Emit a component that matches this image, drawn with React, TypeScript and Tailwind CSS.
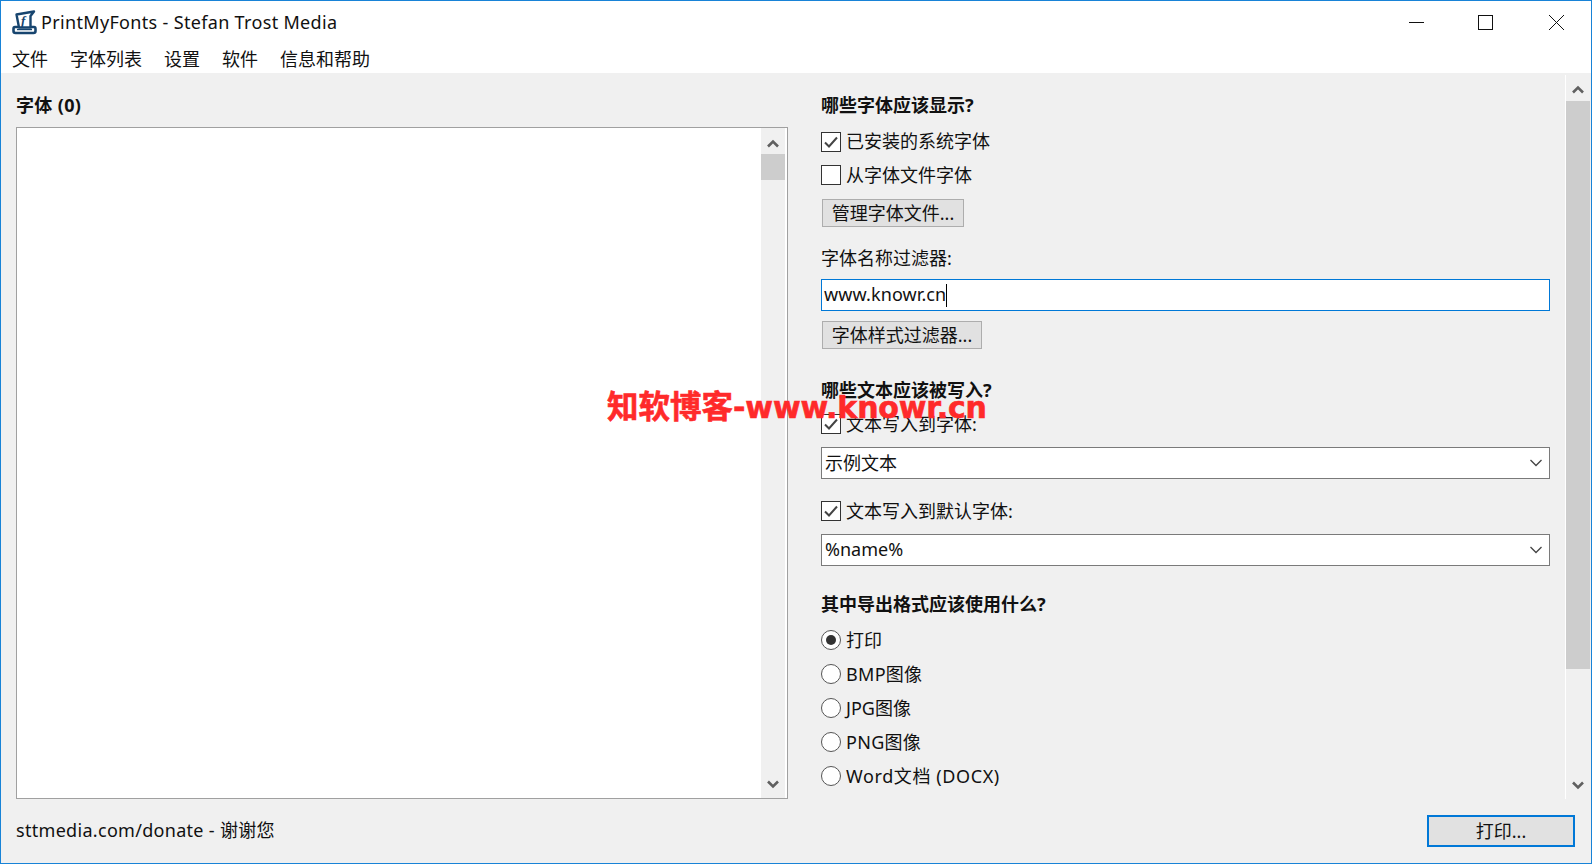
import React from "react";

const font = { fontFamily: '"Noto Sans", "Noto Sans CJK SC", sans-serif' };

function Logo() {
  return (
    <svg width="25" height="25" viewBox="0 0 25 25" fill="none" className="shrink-0">
      <path d="M4.5 4.5 L22 1.5 L18.5 6 L18.5 17.5 L7 17.5 Z" fill="#fff" stroke="#17456f" strokeWidth="2.4" strokeLinejoin="round" />
      <path d="M6 17 L3 17 Q1.5 17 1.5 19 L1.5 21 Q1.5 23 3.5 23 L21.5 23 Q23.5 23 23.5 21 L23.5 19 Q23.5 17 22 17 L19 17" stroke="#17456f" strokeWidth="2.6" />
      <path d="M5 19.5 H20" stroke="#17456f" strokeWidth="1.4" />
      <text x="9" y="15" fontSize="13" fontWeight="700" fontStyle="italic" fill="#17456f" fontFamily="Liberation Serif, serif">f</text>
    </svg>
  );
}

function Check({ on }: { on: boolean }) {
  return (
    <span className="flex h-[20px] w-[20px] shrink-0 items-center justify-center border border-[#333333] bg-white">
      {on && (
        <svg width="16" height="14" viewBox="0 0 16 14" fill="none">
          <path d="M2 7.5 L6 11.5 L14 2.5" stroke="#444444" strokeWidth="2" />
        </svg>
      )}
    </span>
  );
}

function CheckRow({ on, label, mt, lift }: { on: boolean; label: string; mt: string; lift?: string }) {
  return (
    <div className={`flex h-[20px] items-center gap-[5px] ${mt}`}>
      <Check on={on} />
      <span className={`leading-[20px] ${lift ?? ""}`}>{label}</span>
    </div>
  );
}

function RadioRow({ on, label, mt, latin }: { on: boolean; label: string; mt: string; latin?: string }) {
  return (
    <div className={`flex h-[20px] items-center gap-[5px] ${mt}`}>
      <span className="flex h-[20px] w-[20px] shrink-0 items-center justify-center rounded-full border border-[#555555] bg-white">
        {on && <span className="h-[10px] w-[10px] rounded-full bg-[#333333]" />}
      </span>
      <span className={`leading-[20px] ${latin ?? ""}`}>{label}</span>
    </div>
  );
}

function Btn({ label, w, mt }: { label: string; w: string; mt: string }) {
  return (
    <button className={`ml-px flex h-[28px] items-center justify-center border border-[#adadad] bg-[#e1e1e1] text-[18px] ${w} ${mt}`}>
      {label}
    </button>
  );
}

function Select({ value, mt, pb }: { value: string; mt: string; pb?: string }) {
  return (
    <div className={`flex h-[32px] w-[729px] items-center justify-between border border-[#7a7a7a] bg-white pl-[3px] pr-[7px] ${mt}`}>
      <span className={pb}>{value}</span>
      <svg width="12" height="8" viewBox="0 0 12 8" fill="none">
        <path d="M0.5 1 L6 6.5 L11.5 1" stroke="#444444" strokeWidth="1.3" />
      </svg>
    </div>
  );
}

function Arrow({ up }: { up: boolean }) {
  return (
    <svg width="12" height="9" viewBox="0 0 12 9" fill="none">
      <path d={up ? "M1 7.5 L6 2.5 L11 7.5" : "M1 1.5 L6 6.5 L11 1.5"} stroke="#606060" strokeWidth="2.6" />
    </svg>
  );
}

function Heading({ children, mt }: { children: React.ReactNode; mt: string }) {
  return <div className={`h-[26px] font-bold leading-[24px] ${mt}`}>{children}</div>;
}

export default function App() {
  return (
    <div
      className="relative flex h-[864px] w-[1592px] flex-col overflow-hidden border border-[#1883d7] bg-white text-[18px] text-[#111111]"
      style={font}
    >
      <div className="flex h-[39px] items-center pl-[11px] pt-[4px]">
        <Logo />
        <span className="ml-[4px] whitespace-nowrap text-[18px] tracking-[0.33px]">PrintMyFonts - Stefan Trost Media</span>
        <div className="ml-auto flex">
          <div className="flex h-[35px] w-[70px] items-center justify-center">
            <svg width="15" height="15" viewBox="0 0 15 15"><path d="M0 7.5 H15" stroke="#111" strokeWidth="1" /></svg>
          </div>
          <div className="flex h-[35px] w-[70px] items-center justify-center pr-[2px]">
            <svg width="15" height="15" viewBox="0 0 15 15" fill="none"><rect x="0.5" y="0.5" width="14" height="14" stroke="#111" strokeWidth="1" /></svg>
          </div>
          <div className="flex h-[35px] w-[70px] items-center justify-center">
            <svg width="15" height="15" viewBox="0 0 15 15"><path d="M0 0 L15 15 M15 0 L0 15" stroke="#111" strokeWidth="1" /></svg>
          </div>
        </div>
      </div>

      <div className="flex h-[33px] items-center gap-[22px] pl-[11px] pt-[5px]">
        <span>文件</span>
        <span>字体列表</span>
        <span>设置</span>
        <span>软件</span>
        <span>信息和帮助</span>
      </div>

      <div className="flex flex-1 flex-col bg-[#f0f0f0]">
        <div className="flex h-[726px]">
          <div className="ml-[15px] flex w-[772px] flex-col pt-[20px]">
            <div className="h-[26px] font-bold leading-[24px] tracking-[0.35px]">字体 (0)</div>
            <div className="mt-[8px] flex h-[672px] border border-[#a0a0a0] bg-white">
              <div className="flex-1" />
              <div className="mr-[2px] flex w-[24px] flex-col bg-[#f0f0f0]">
                <div className="flex h-[26px] items-center justify-center pt-[4px]"><Arrow up /></div>
                <div className="h-[26px] bg-[#cdcdcd]" />
                <div className="flex-1" />
                <div className="flex h-[26px] items-center justify-center pb-[2px]"><Arrow up={false} /></div>
              </div>
            </div>
          </div>

          <div className="ml-[33px] flex w-[730px] flex-col pt-[20px]">
            <Heading mt="">哪些字体应该显示?</Heading>
            <CheckRow on label="已安装的系统字体" mt="mt-[13px]" lift="pb-[2px]" />
            <CheckRow on={false} label="从字体文件字体" mt="mt-[13px]" />
            <Btn label="管理字体文件..." w="w-[142px]" mt="mt-[14px]" />
            <div className="mt-[18px] h-[26px] leading-[26px]">字体名称过滤器:</div>
            <div className="mt-[8px] flex h-[32px] w-[729px] items-center border border-[#0078d7] bg-white pl-[2px]">
              <span className="pb-[2px] tracking-[0.1px]">www.knowr.cn</span>
              <span className="h-[23px] w-px bg-black" />
            </div>
            <Btn label="字体样式过滤器..." w="w-[160px]" mt="mt-[10px]" />
            <div className="mt-[28px] h-[26px] font-bold leading-[26px]">哪些文本应该被写入?</div>
            <CheckRow on label="文本写入到字体:" mt="mt-[11px]" />
            <Select value="示例文本" mt="mt-[13px]" />
            <CheckRow on label="文本写入到默认字体:" mt="mt-[22px]" />
            <Select value="%name%" mt="mt-[13px]" pb="pb-[2px]" />
            <Heading mt="mt-[26px]">其中导出格式应该使用什么?</Heading>
            <RadioRow on label="打印" mt="mt-[12px]" />
            <RadioRow on={false} label="BMP图像" mt="mt-[14px]" latin="tracking-[0.3px]" />
            <RadioRow on={false} label="JPG图像" mt="mt-[14px]" />
            <RadioRow on={false} label="PNG图像" mt="mt-[14px]" latin="tracking-[0.3px]" />
            <RadioRow on={false} label="Word文档 (DOCX)" mt="mt-[14px]" latin="tracking-[0.6px]" />
          </div>

          <div className="ml-[14px] mt-[2px] flex w-[26px] flex-col border-l border-white pr-px">
            <div className="flex h-[26px] items-center justify-center pt-[2px]"><Arrow up /></div>
            <div className="h-[568px] bg-[#cdcdcd]" />
            <div className="flex-1" />
            <div className="flex h-[26px] items-center justify-center pb-[2px]"><Arrow up={false} /></div>
          </div>
        </div>

        <div className="flex flex-1 items-center justify-between pl-[15px] pr-[16px]">
          <span className="mb-[2px] tracking-[0.3px]">sttmedia.com/donate - 谢谢您</span>
          <button className="flex h-[32px] w-[148px] items-center justify-center border-2 border-[#0078d7] bg-[#e1e1e1] text-[18px]">
            打印...
          </button>
        </div>
      </div>

      <div
        className="absolute left-[606px] top-[386px] flex items-baseline whitespace-nowrap font-bold leading-[40px] text-[#ff2a2a] [-webkit-text-stroke:0.6px_#ff2a2a]"
        style={{ fontFamily: '"DejaVu Sans", "Noto Sans CJK SC", sans-serif' }}
      >
        <span className="text-[31.5px]">知软博客</span>
        <span className="text-[30px] tracking-[-0.15px]">-www.knowr.cn</span>
      </div>
    </div>
  );
}
